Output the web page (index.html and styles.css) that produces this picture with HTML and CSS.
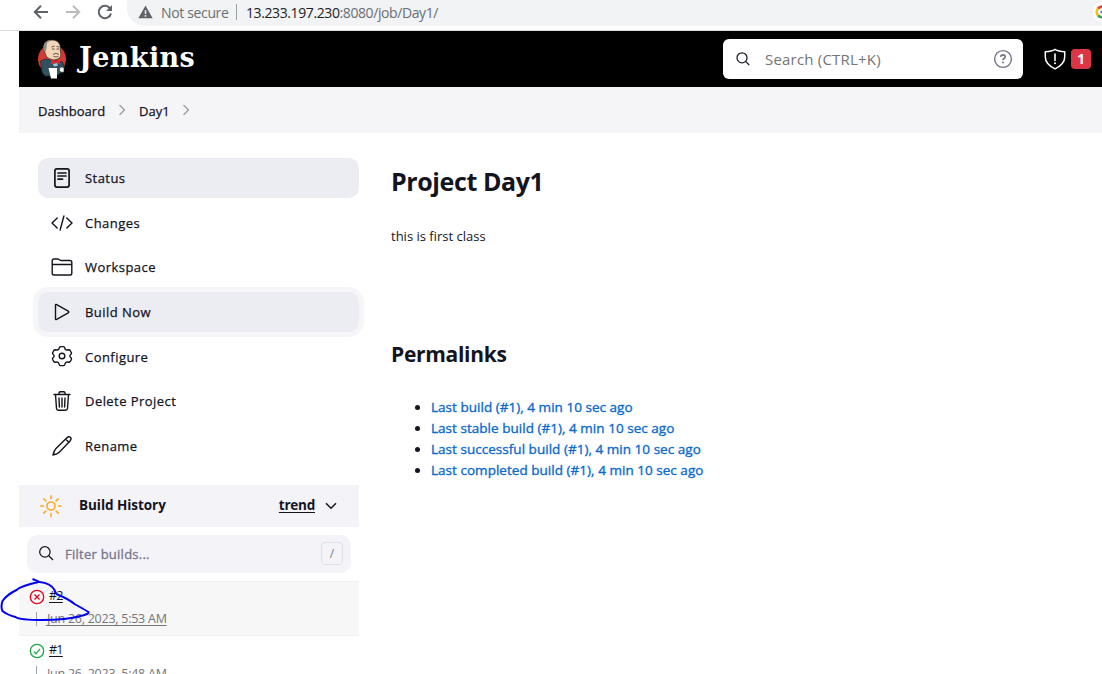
FILE: index.html
```html
<!DOCTYPE html>
<html lang="en">
<head>
<meta charset="utf-8">
<title>Day1 [Jenkins]</title>
<link rel="stylesheet" href="styles.css">
</head>
<body>
<div class="browser-bar">
  <svg class="nav-icon" viewBox="0 0 16 16"><path d="M15 8H2M8 1.8 1.8 8 8 14.2" fill="none" stroke="#5f6368" stroke-width="2"/></svg>
  <svg class="nav-icon nav-forward" viewBox="0 0 16 16"><path d="M1 8h13M8 1.8 14.2 8 8 14.2" fill="none" stroke="#babcbe" stroke-width="2"/></svg>
  <svg class="nav-icon nav-reload" viewBox="0 0 16 16"><path d="M13.2 4.6A6.2 6.2 0 1 0 14 9.5" fill="none" stroke="#5f6368" stroke-width="2"/><path d="M15 1v6H9z" fill="#5f6368"/></svg>
  <div class="address">
    <svg class="warning" viewBox="0 0 16 14"><path d="M8 0l7.6 13.6H.4z" fill="#5f6368"/><path d="M8 5v4M8 10.2v1.8" stroke="#f1f3f4" stroke-width="1.6"/></svg>
    <span class="insecure">Not secure</span>
    <span class="divider"></span>
    <span class="url"><span class="host">13.233.197.230</span>:8080/job/Day1/</span>
    <svg class="google" viewBox="0 0 20 20"><circle cx="10" cy="10" r="9.5" fill="#fff"/><g fill="none" stroke-width="2.6"><path d="M6 6.6A5.2 5.2 0 0 1 13.6 6" stroke="#ea4335"/><path d="M6 6.6a5.2 5.2 0 0 0 0 6.8" stroke="#fbbc05"/><path d="M6 13.4a5.2 5.2 0 0 0 7.6.4" stroke="#34a853"/><path d="M13.6 13.8A5 5 0 0 0 15.2 10H8.500" stroke="#4285f4"/></g></svg>
  </div>
</div>
<div class="page">
  <header class="header">
    <a class="brand">
      <svg class="butler" viewBox="0 0 30 40">
        <ellipse cx="15" cy="20" rx="14" ry="14.500" fill="#d33833"/>
        <path d="M3.500 22l5-2 4 1 8 1 5 1 2 5-2 5-7 4H8l-3-4z" fill="#335061" stroke="#1b2a35" stroke-width=".7"/>
        <path d="M7 5Q9 1 15 1q6 0 8 5l.5 7Q25 18 21 20q-4 2-8 0-4-1-5-6-2-5-1-9z" fill="#f0d6b7" stroke="#30231d" stroke-width=".7"/>
        <path d="M6.500 7Q8 1.500 14 1L10 4l-.5 5-1 4Q5.500 11 6.500 7z" fill="#8f8a84"/>
        <path d="M14.500 8l3-1M19.500 7.500l2.500.5M15 10h2.500M19.500 10h2.500M16 15.500q3-2.500 6 0M16.500 17.500q2.500 1 5 0" fill="none" stroke="#5b463b" stroke-width=".9"/>
        <path d="M14 20l5 2 4-2v5.500l-4-2-5 2z" fill="#e0282c"/>
        <path d="M16 25l4-1 1 2.500-4 1z" fill="#a9c4d5"/>
        <path d="M11.500 29h8.500v10.500h-6z" fill="#fff"/>
        <path d="M22.500 29q2.500-2 4.500 0v4q-2.500 1-4.500-1z" fill="#f5f1eb" stroke="#30231d" stroke-width=".5"/>
      </svg>
      <span class="wordmark">Jenkins</span>
    </a>
    <div class="search">
      <svg class="search-glass" viewBox="0 0 16 16"><g fill="none" stroke="#1f2029" stroke-width="1.3"><circle cx="7" cy="6.8" r="5"/><path d="M10.600 10.400l3.600 3.600"/></g></svg>
      <span class="search-text">Search (CTRL+K)</span>
      <svg class="help" viewBox="0 0 20 20"><circle cx="10" cy="10" r="8.400" fill="none" stroke="#73738c" stroke-width="1.4"/><path d="M7.700 7.900q.1-2 2.300-2 2.200.1 2.200 1.900 0 1-1.100 1.700-1.100.7-1.100 1.700" fill="none" stroke="#73738c" stroke-width="1.600"/><circle cx="10" cy="13.600" r="1" fill="#73738c"/></svg>
    </div>
    <svg class="shield" viewBox="0 0 22 22"><path d="M11 1.400C8 3.500 4.500 3.700 1.300 3.700V9c0 6 4.700 9.400 9.700 11.900 5-2.500 9.700-5.900 9.700-11.900V3.700C17.500 3.700 14 3.500 11 1.400z" fill="none" stroke="#fff" stroke-width="1.500" stroke-linejoin="round"/><path d="M11 6v6.500" stroke="#fff" stroke-width="1.600" stroke-linecap="round"/><circle cx="11" cy="15.300" r="1" fill="#fff"/></svg>
    <span class="alert-count">1</span>
  </header>
  <nav class="crumbs">
    <span class="crumb crumb-root">Dashboard</span>
    <svg class="crumb-arrow" viewBox="0 0 8 12"><path d="M1.500 1l5 5-5 5"/></svg>
    <span class="crumb crumb-job">Day1</span>
    <svg class="crumb-arrow" viewBox="0 0 8 12"><path d="M1.500 1l5 5-5 5"/></svg>
  </nav>
  <div class="columns">
    <aside class="side">
      <div class="tasks">
        <a class="task active"><svg class="bold-icon" viewBox="0 0 24 24"><rect x="4.900" y="2.900" width="14.200" height="18.200" rx="2"/><path d="M8 7h8M8 10h8M8 13.200h4.500"/></svg><span>Status</span></a>
        <a class="task"><svg viewBox="0 0 24 24"><path d="M7.200 7L2 12l5.200 5M16.800 7L22 12l-5.200 5M13.900 5l-3.800 14"/></svg><span>Changes</span></a>
        <a class="task"><svg viewBox="0 0 24 24"><path d="M2.200 9.500V5.800Q2.200 4 4 4h3.600q.8 0 1.400.5l.7.5q.6.500 1.400.5H20q1.800 0 1.800 1.800v10.900Q21.800 20 20 20H4q-1.800 0-1.800-1.800V9.500h19.600"/></svg><span>Workspace</span></a>
        <a class="task active focused"><svg viewBox="0 0 24 24"><path d="M5.500 5.300v13.400q0 1.300 1.200.7l11.500-6.600q1.200-.8 0-1.600L6.700 4.600q-1.200-.6-1.200.7z"/></svg><span>Build Now</span></a>
        <a class="task"><svg viewBox="0 0 24 24"><circle cx="12" cy="11" r="2.800"/><path d="M10.500 1.600h3q1 .2 1.200 1.200.3 1.900 1.900 2.200l2.400-.2q1 .2 1.600 1.500l.8 1.500q.3 1-.6 1.700-1.900 1.500 0 3l.6.800q.3.500-.2 1.500l-1 1.700q-.6.900-1.600.7-2.600-.6-3.400 1l-.5 1.600q-.3.800-1.200.8h-3q-.9 0-1.200-.8l-.5-1.600q-.8-1.600-3.400-1-1 .2-1.600-.7l-1-1.700q-.5-1-.2-1.500l.6-.8q1.900-1.500 0-3-.9-.7-.6-1.700l.8-1.500Q4 5 5 4.800l2.400.2Q9 4.700 9.300 2.800q.2-1 1.200-1.200z"/></svg><span>Configure</span></a>
        <a class="task"><svg viewBox="0 0 24 24"><path d="M4 5.500h16M5.500 5.500l1 14q.1 1.800 1.900 1.800h7.200q1.800 0 1.900-1.800l1-14M9 5.500V4q0-1.300 1.300-1.300h3.400Q15 2.700 15 4v1.500M9 9l.4 9M12 9v9M15 9l-.4 9"/></svg><span>Delete Project</span></a>
        <a class="task"><svg viewBox="0 0 24 24"><path d="M16.400 4.200q2.400-2.500 4 -.9t-.6 4L9.500 18Q7.500 20 3 21 4 16.500 6 14.500zM15.600 5l3.500 3.500"/></svg><span>Rename</span></a>
      </div>
      <div class="history-head">
        <svg class="sun" viewBox="0 0 24 24"><circle cx="12" cy="12" r="4"/><path d="M12 1.800v2.600M12 19.600v2.600M1.800 12h2.600M19.600 12h2.600M4.800 4.800l2 2M17.200 17.200l2 2M19.200 4.800l-2 2M6.800 17.200l-2 2"/></svg>
        <span class="history-title">Build History</span>
        <a class="trend">trend</a>
        <svg class="chevron" viewBox="0 0 12 8"><path d="M1 1.300l5 5 5-5"/></svg>
      </div>
      <div class="filter">
        <svg class="filter-glass" viewBox="0 0 18 18"><circle cx="7.300" cy="7.300" r="5.500"/><path d="M11.400 11.400l4.500 4.500"/></svg>
        <span class="filter-text">Filter builds...</span>
        <span class="key">/</span>
      </div>
      <div class="build build-failed">
        <div class="build-line"><svg class="result failed" viewBox="0 0 16 16"><circle cx="8" cy="8" r="6.700"/><path d="M5.500 5.500l5 5M10.500 5.500l-5 5"/></svg><a class="number">#2</a></div>
        <div class="build-date"><span class="date">Jun 26, 2023, 5:53 AM</span></div>
      </div>
      <div class="build">
        <div class="build-line"><svg class="result passed" viewBox="0 0 16 16"><circle cx="8" cy="8" r="6.700"/><path d="M5 8.800l2 2 4-5"/></svg><a class="number">#1</a></div>
        <div class="build-date"><span class="date">Jun 26, 2023, 5:48 AM</span></div>
      </div>
    </aside>
    <main class="main">
      <h1>Project Day1</h1>
      <p class="description">this is first class</p>
      <h2>Permalinks</h2>
      <ul class="permalinks">
        <li><a>Last build (#1), 4 min 10 sec ago</a></li>
        <li><a>Last stable build (#1), 4 min 10 sec ago</a></li>
        <li><a>Last successful build (#1), 4 min 10 sec ago</a></li>
        <li><a>Last completed build (#1), 4 min 10 sec ago</a></li>
      </ul>
    </main>
  </div>
</div>
<svg class="ink" viewBox="0 0 92 46"><path d="M32.500 3l7 3q11 1 15 8 1 4 4 5 10 4 16 9 9 5 14 8 1 2-8 4-14 4-38 4-23 0-27-3-8-2-13-6-2-4 0-10 4-6 14-11 4-4 22-8"/></svg>
</body>
</html>
```
FILE: styles.css
```css
* { box-sizing: border-box; }
body {
  margin: 0;
  width: 1102px;
  height: 674px;
  overflow: hidden;
  position: relative;
  background: #fff;
  color: #14141f;
  font-family: "Open Sans", "Noto Sans", sans-serif;
  font-size: 14px;
  white-space: nowrap;
}
svg { display: block; flex: none; }

.browser-bar { height: 31px; display: flex; align-items: flex-start; padding-left: 33px; border-bottom: 1px solid #dcdde0; }
.nav-icon { width: 16px; height: 16px; margin-top: 4px; }
.nav-forward { margin-left: 16px; }
.nav-reload { margin-left: 16px; }
.address { flex: 1; height: 26px; margin-left: 14px; padding: 0 0 2px 11px; display: flex; align-items: center; background: #f1f3f4; border-radius: 0 0 0 18px; color: #6b6f73; overflow: hidden; }
.warning { width: 15px; height: 14px; }
.insecure { width: 75px; margin-left: 8px; letter-spacing: -.35px; }
.divider { width: 1px; height: 16px; background: #9aa0a6; }
.url { margin-left: 9px; letter-spacing: -.4px; }
.host { color: #202124; }
.google { width: 20px; height: 20px; margin: 0 -10px 0 auto; }

.page { margin-left: 19px; }
.header { height: 56px; background: #000; display: flex; align-items: center; padding-left: 18px; }
.brand { display: flex; align-items: center; }
.butler { width: 30px; height: 40px; }
.wordmark { margin: -3px 0 0 12px; color: #fff; font: bold 27px/40px "DejaVu Serif", serif; letter-spacing: .4px; }
.search { width: 300px; height: 40px; margin-left: auto; padding: 0 10px 0 12px; display: flex; align-items: center; background: #fff; border-radius: 6px; }
.search-glass { width: 16px; height: 16px; }
.search-text { margin-left: 14px; color: #757575; font-size: 15px; letter-spacing: .2px; }
.help { width: 20px; height: 20px; margin-left: auto; }
.shield { width: 22px; height: 22px; margin-left: 21px; }
.alert-count { width: 20px; height: 20px; margin: 0 11px 0 5px; border-radius: 4px; background: #dc3545; color: #fff; font-weight: 700; line-height: 20px; text-align: center; }

.crumbs { height: 46px; padding: 2px 0 0 19px; background: #f5f5f8; display: flex; align-items: center; font-size: 13px; -webkit-text-stroke: .25px #14141f; }
.crumb-root { width: 80px; }
.crumb-job { width: 34px; margin: 0 9px 0 13px; }
.crumb-arrow { width: 8px; height: 12px; margin-top: -3px; fill: none; stroke: #9b9baa; stroke-width: 1.3; }

.columns { display: flex; }
.side { width: 340px; }
.tasks { display: grid; gap: 4.67px; margin: 25px 0 19px 19px; }
.task { height: 40px; padding-left: 12px; display: flex; align-items: center; gap: 11px; border-radius: 10px; font-size: 13px; letter-spacing: .45px; -webkit-text-stroke: .25px #14141f; }
.task svg { width: 24px; height: 24px; fill: none; stroke: #14141f; stroke-width: 1.4; stroke-linecap: round; stroke-linejoin: round; }
.task .bold-icon { stroke-width: 1.7; }
.task.active { width: 321px; background: #ecedf3; }
.task.focused { box-shadow: 0 0 0 5px #f6f6f9; }

.history-head { height: 42px; padding: 0 22px 1px 20px; display: flex; align-items: center; background: #f3f3f8; font-size: 13.5px; font-weight: 700; }
.sun { width: 24px; height: 24px; margin-top: 1px; fill: none; stroke: #fcaf2b; stroke-width: 1.7; stroke-linecap: round; }
.history-title { margin-left: 16px; letter-spacing: -.05px; }
.trend { margin-left: auto; letter-spacing: -.25px; text-decoration: underline; text-underline-offset: 2px; }
.chevron { width: 12px; height: 8px; margin: 1px 0 0 10px; fill: none; stroke: #14141f; stroke-width: 1.5; }

.filter { height: 38px; margin: 8px; padding: 0 8px 0 11px; display: flex; align-items: center; background: #f3f3f8; border-radius: 11px; color: #76768c; font-size: 13px; }
.filter-glass { width: 17px; height: 17px; fill: none; stroke: #14141f; stroke-width: 1.3; }
.filter-text { margin-left: 10px; letter-spacing: .25px; -webkit-text-stroke: .3px #76768c; }
.key { width: 22px; height: 23px; margin-left: auto; border: 1px solid #e0e0e9; border-radius: 4px; font-size: 12px; line-height: 21px; text-align: center; }

.build { height: 54.5px; padding: 6px 0 0 10px; border-top: 1px solid #f0f0f0; }
.build-failed { background: #f7f7f7; }
.build-line { height: 19px; display: flex; align-items: center; gap: 4px; }
.result { width: 16px; height: 16px; margin-top: -1px; fill: none; stroke-width: 1.3; }
.failed { stroke: #e6001f; }
.passed { stroke: #1ea64b; }
.number { font-size: 12.5px; line-height: 16px; margin-top: -3px; letter-spacing: -.7px; text-decoration: underline; text-underline-offset: 2px; }
.build-date { height: 14px; margin: 5px 0 0 7px; padding-left: 10px; display: flex; align-items: center; border-left: 1px solid #9ba7b0; }
.date { color: #757579; font-size: 12.5px; letter-spacing: -.25px; text-decoration: underline; text-underline-offset: 2px; }

.main { padding: 30px 0 0 32px; }
h1 { margin: 0; font-size: 25px; line-height: 36px; font-weight: 700; letter-spacing: -.4px; }
.description { margin: 27px 0 0; font-size: 13px; line-height: 20px; }
h2 { margin: 92px 0 0; font-size: 21px; line-height: 32px; font-weight: 700; letter-spacing: -.3px; }
.permalinks { margin: 27px 0 0; padding-left: 40px; font-size: 13.5px; line-height: 21px; }
.permalinks a { color: #0b6acb; letter-spacing: .03px; -webkit-text-stroke: .35px #0b6acb; }

.ink { position: absolute; left: 0; top: 576px; width: 92px; height: 46px; fill: none; stroke: #0000f5; stroke-width: 2; stroke-linejoin: round; }
```
